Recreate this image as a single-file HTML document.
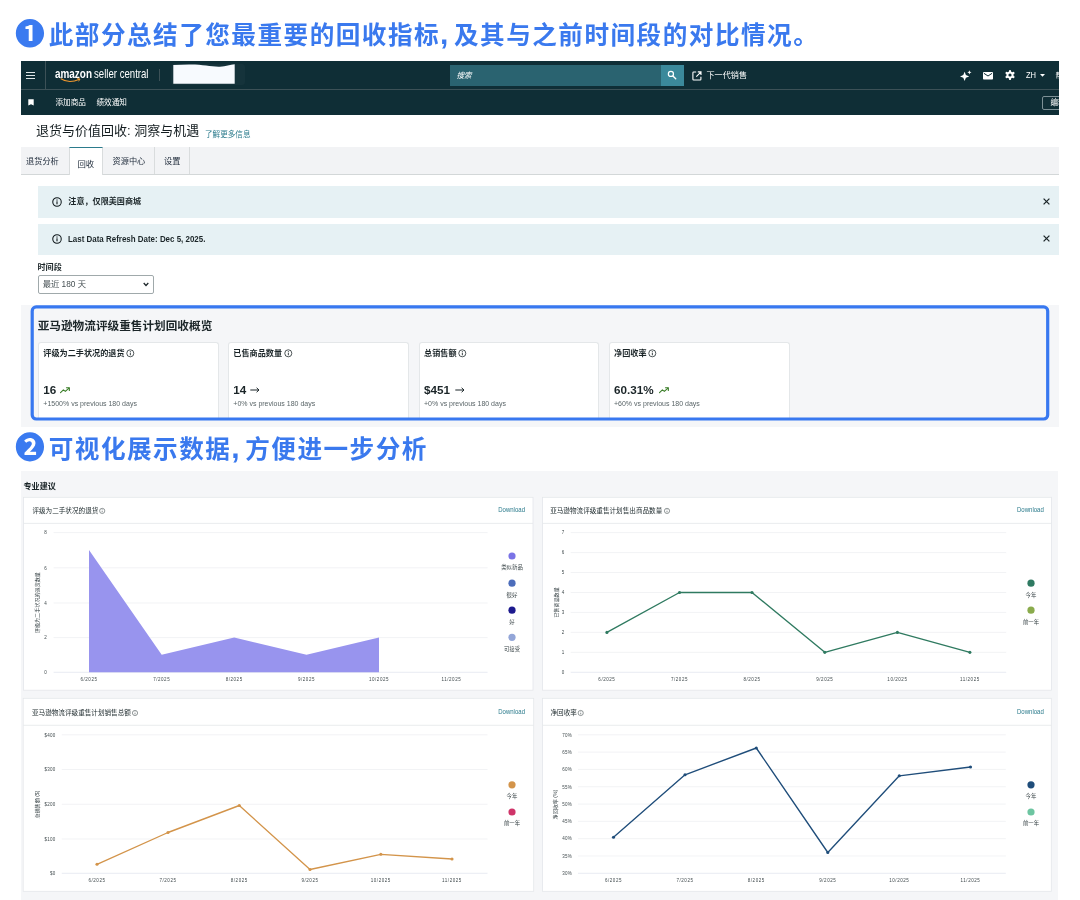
<!DOCTYPE html>
<html lang="zh-CN">
<head>
<meta charset="utf-8">
<title>退货与价值回收: 洞察与机遇</title>
<style>
html,body{margin:0;padding:0;background:#fff;}
body{width:1080px;height:900px;position:relative;overflow:hidden;
  font-family:"Liberation Sans","Noto Sans CJK SC",sans-serif;color:#0f1111;
  -webkit-font-smoothing:antialiased;}
.a{position:absolute;white-space:nowrap;line-height:1;}
.h{position:absolute;white-space:nowrap;line-height:1;color:#3a79ee;font-weight:700;font-size:24.6px;letter-spacing:1.5px;
  font-family:"Liberation Sans","Noto Sans CJK SC",sans-serif;}
.num{position:absolute;line-height:1;color:#3a7af0;font-weight:700;font-size:29.9px;white-space:nowrap;}
.card{top:281.3px;height:77px;background:#fff;border:1px solid #e4e7e9;border-bottom:none;border-radius:3px 3px 0 0;box-sizing:border-box;}
.cl{top:288.5px;font-size:8.15px;font-weight:700;color:#1b2528;}
.cv{top:323.2px;font-size:11.7px;font-weight:700;color:#1b2528;}
.cs{top:339.3px;font-size:7px;color:#5a6568;}
.w{color:#fff;}
.b{font-weight:700;}
.teal{color:#2b7b8c;}
svg{position:absolute;overflow:visible;}
svg text{font-family:"Liberation Sans","Noto Sans CJK SC",sans-serif;}
</style>
</head>
<body>
<div id="root" style="position:absolute;left:0;top:0;width:1080px;height:900px;will-change:transform;">

<!-- ============ HEADING 1 ============ -->
<div class="num" style="left:14.9px;top:19.2px;">❶</div>
<div class="h" style="left:48.7px;top:24px;">此部分总结了您最重要的回收指标<span style="font-size:30px;line-height:0;letter-spacing:0;">,</span><span style="margin-left:5.5px">及其与之前时间段的对比情况。</span></div>

<!-- ============ SCREENSHOT 1 ============ -->
<div id="s1" class="a" style="left:21px;top:61px;width:1037.7px;height:366px;overflow:hidden;background:#fff;">
  <!-- dark header -->
  <div class="a" style="left:0;top:0;width:1038px;height:54.2px;background:#0f2e36;"></div>
  <div class="a" style="left:0;top:27.5px;width:1038px;height:1px;background:#3c5157;"></div>
  <div class="a" style="left:24px;top:0;width:1px;height:28px;background:#3c5157;"></div>
  <!-- hamburger -->
  <div class="a" style="left:5px;top:10.9px;width:9px;height:1.4px;background:#dfe6e7;"></div>
  <div class="a" style="left:5px;top:13.8px;width:9px;height:1.4px;background:#dfe6e7;"></div>
  <div class="a" style="left:5px;top:16.7px;width:9px;height:1.4px;background:#dfe6e7;"></div>
  <!-- logo -->
  <div class="a w b" style="left:34.2px;top:7.6px;font-size:11.9px;transform:scaleX(0.835);transform-origin:0 0;">amazon</div>
  <div class="a w" style="left:72.8px;top:7.3px;font-size:12.1px;transform:scaleX(0.795);transform-origin:0 0;">seller central</div>
  <svg style="left:38.8px;top:17px;" width="22" height="5" viewBox="0 0 22 5"><path d="M1 0.8 C6 4.2 13 4.2 19.5 1.2" fill="none" stroke="#f0982e" stroke-width="1.1" stroke-linecap="round"/><path d="M17.6 0.5 L20 1 L18.8 3" fill="none" stroke="#f0982e" stroke-width="0.9" stroke-linecap="round" stroke-linejoin="round"/></svg>
  <div class="a" style="left:138.2px;top:8px;width:1px;height:12px;background:#3c5157;"></div>
  <div class="a" style="left:150px;top:3px;width:74px;height:21px;border-radius:3px;background:#15333b;"></div>
  <svg style="left:0;top:0;" width="230" height="28"><path d="M152.3 4 L168 3.6 C182 3.4 190 6 199 5.7 C205 5.4 209 3.5 213.7 3.2 L213.7 22.8 L152.3 22.8 Z" fill="#f7fafe"/></svg>
  <!-- search -->
  <div class="a" style="left:429px;top:4px;width:211px;height:20.5px;background:#2a6370;"></div>
  <div class="a" style="left:640px;top:4px;width:23px;height:20.5px;background:#3b899b;"></div>
  <div class="a w" style="left:435.5px;top:10.5px;font-size:7.6px;font-style:italic;">搜索</div>
  <svg style="left:646px;top:9px;" width="10" height="10" viewBox="0 0 11 11"><circle cx="4.3" cy="4.3" r="2.8" fill="none" stroke="#fff" stroke-width="1.35"/><path d="M6.5 6.5 L9.6 9.6" stroke="#fff" stroke-width="1.5" stroke-linecap="round"/></svg>
  <!-- external link + text -->
  <svg style="left:671px;top:9.5px;" width="10" height="10" viewBox="0 0 10 10"><path d="M4.2 1 H1.6 Q0.9 1 0.9 1.7 V8.3 Q0.9 9 1.6 9 H8.2 Q8.9 9 8.9 8.3 V5.8" fill="none" stroke="#fff" stroke-width="1.1"/><path d="M4.3 5.6 L8.8 1.1 M5.8 0.9 H9 V4.1" fill="none" stroke="#fff" stroke-width="1.1"/></svg>
  <div class="a w" style="left:685.5px;top:11.3px;font-size:8.1px;">下一代销售</div>
  <!-- right icons -->
  <svg style="left:938.5px;top:8.5px;" width="12" height="12" viewBox="0 0 12 12"><path d="M4.6 1.8 L5.9 5.1 L9.2 6.4 L5.9 7.7 L4.6 11 L3.3 7.7 L0 6.4 L3.3 5.1 Z" fill="#fff"/><path d="M9.4 0.2 L10 1.7 L11.5 2.3 L10 2.9 L9.4 4.4 L8.8 2.9 L7.3 2.3 L8.8 1.7 Z" fill="#fff"/></svg>
  <svg style="left:961.5px;top:10.5px;" width="10" height="8" viewBox="0 0 10 8"><rect x="0" y="0" width="10" height="7.6" rx="0.8" fill="#fff"/><path d="M0.9 1.3 L5 4 L9.1 1.3" fill="none" stroke="#0f2e36" stroke-width="1"/></svg>
  <svg style="left:984px;top:9.3px;" width="10" height="10" viewBox="0 0 10 10"><g fill="#fff"><circle cx="5" cy="5" r="3.6"/><rect x="4" y="0" width="2" height="10" rx="0.4"/><rect x="4" y="0" width="2" height="10" rx="0.4" transform="rotate(60 5 5)"/><rect x="4" y="0" width="2" height="10" rx="0.4" transform="rotate(120 5 5)"/></g><circle cx="5" cy="5" r="1.6" fill="#0f2e36"/></svg>
  <div class="a w" style="left:1005.3px;top:10.2px;font-size:9px;transform:scaleX(0.84);transform-origin:0 0;">ZH</div>
  <svg style="left:1019.3px;top:13.2px;" width="5" height="3" viewBox="0 0 5 3"><path d="M0 0 H5 L2.5 2.8 Z" fill="#fff"/></svg>
  <div class="a w" style="left:1034.5px;top:11.3px;font-size:7.4px;">帮助</div>
  <!-- row 2 -->
  <svg style="left:7.3px;top:37.8px;" width="6" height="7" viewBox="0 0 6 7"><path d="M0.3 0.2 H5.7 V6.6 L3 5.2 L0.3 6.6 Z" fill="#fff"/></svg>
  <div class="a w" style="left:34.5px;top:37.8px;font-size:7.6px;">添加商品</div>
  <div class="a w" style="left:75.5px;top:37.8px;font-size:7.6px;">绩效通知</div>
  <div class="a" style="left:1020.9px;top:34.6px;width:30px;height:14px;border:0.8px solid #7d9096;border-radius:2px;box-sizing:border-box;"></div>
  <div class="a w" style="left:1029.5px;top:38px;font-size:7.6px;">编辑</div>

  <!-- page title -->
  <div class="a" style="left:15px;top:62.5px;font-size:13px;color:#141d20;">退货与价值回收: 洞察与机遇</div>
  <div class="a teal" style="left:184px;top:69.7px;font-size:7.6px;">了解更多信息</div>

  <!-- tabs -->
  <div class="a" style="left:0;top:86px;width:1038px;height:27px;background:#f2f3f5;border-bottom:1px solid #d3d7d8;"></div>
  <div class="a" style="left:48px;top:86px;width:34px;height:27.7px;background:#fff;border-left:1px solid #d9dcdd;border-right:1px solid #d9dcdd;border-top:1.6px solid #2b7b8c;box-sizing:border-box;"></div>
  <div class="a" style="left:133px;top:86px;width:1px;height:27px;background:#d9dcdd;"></div>
  <div class="a" style="left:168px;top:86px;width:1px;height:27px;background:#d9dcdd;"></div>
  <div class="a" style="left:5px;top:97px;font-size:8.2px;color:#232f3e;">退货分析</div>
  <div class="a" style="left:56.5px;top:98.5px;font-size:8.4px;color:#232f3e;">回收</div>
  <div class="a" style="left:91.5px;top:97px;font-size:8.2px;color:#232f3e;">资源中心</div>
  <div class="a" style="left:143px;top:97px;font-size:8.2px;color:#232f3e;">设置</div>


  <!-- alerts -->
  <div class="a" style="left:16.5px;top:125px;width:1022px;height:32px;background:#e6f1f4;"></div>
  <div class="a" style="left:16.5px;top:163px;width:1022px;height:31px;background:#e6f1f4;"></div>
  <svg style="left:31.2px;top:135.8px;" width="10" height="10" viewBox="0 0 10 10"><circle cx="5" cy="5" r="4.25" fill="none" stroke="#10191c" stroke-width="1.05"/><rect x="4.45" y="4.3" width="1.1" height="3" fill="#10191c"/><rect x="4.45" y="2.5" width="1.1" height="1.1" fill="#10191c"/></svg>
  <svg style="left:31.2px;top:173.1px;" width="10" height="10" viewBox="0 0 10 10"><circle cx="5" cy="5" r="4.25" fill="none" stroke="#10191c" stroke-width="1.05"/><rect x="4.45" y="4.3" width="1.1" height="3" fill="#10191c"/><rect x="4.45" y="2.5" width="1.1" height="1.1" fill="#10191c"/></svg>
  <div class="a b" style="left:47.3px;top:136.8px;font-size:8.1px;color:#1b2528;">注意，仅限美国商城</div>
  <div class="a b" style="left:47.3px;top:174px;font-size:8.7px;color:#1b2528;transform:scaleX(0.915);transform-origin:0 0;">Last Data Refresh Date: Dec 5, 2025.</div>
  <svg style="left:1022.3px;top:136.8px;" width="7" height="7" viewBox="0 0 7 7"><path d="M0.6 0.6 L6.4 6.4 M6.4 0.6 L0.6 6.4" stroke="#1b2528" stroke-width="1.25" fill="none"/></svg>
  <svg style="left:1022.3px;top:174.2px;" width="7" height="7" viewBox="0 0 7 7"><path d="M0.6 0.6 L6.4 6.4 M6.4 0.6 L0.6 6.4" stroke="#1b2528" stroke-width="1.25" fill="none"/></svg>

  <!-- time period -->
  <div class="a b" style="left:16.5px;top:202.7px;font-size:8.1px;color:#1b2528;">时间段</div>
  <div class="a" style="left:16.7px;top:214.3px;width:116.5px;height:18.5px;border:0.9px solid #a0a9ab;border-radius:2px;box-sizing:border-box;background:#fff;"></div>
  <div class="a" style="left:21.7px;top:219.3px;font-size:8.3px;color:#454f52;">最近 180 天</div>
  <svg style="left:121.8px;top:220.8px;" width="6" height="5" viewBox="0 0 6 5"><path d="M0.7 1 L3 3.5 L5.3 1" fill="none" stroke="#1b2528" stroke-width="1.25"/></svg>

  <!-- summary -->
  <div class="a" style="left:0;top:244px;width:1038px;height:122px;background:#f5f6f8;"></div>
  <div class="a card" style="left:16.7px;width:181px;"></div>
  <div class="a card" style="left:207.3px;width:180.5px;"></div>
  <div class="a card" style="left:398px;width:180px;"></div>
  <div class="a card" style="left:588px;width:180.5px;"></div>
  <svg style="left:0;top:0;" width="1038" height="366"><rect x="11.2" y="245.9" width="1015.5" height="112.1" rx="4" ry="4" fill="none" stroke="#3878f0" stroke-width="3.2"/></svg>
  <div class="a b" style="left:16.7px;top:258.8px;font-size:11.65px;color:#1b2528;">亚马逊物流评级重售计划回收概览</div>


  <div class="a cl" style="left:22.3px;">评级为二手状况的退货</div><svg style="left:105.3px;top:288px;" width="8.6" height="8.6" viewBox="0 0 10 10"><circle cx="5" cy="5" r="4.1" fill="none" stroke="#1b2528" stroke-width="0.9"/><rect x="4.5" y="4.3" width="1" height="3" fill="#1b2528"/><rect x="4.5" y="2.5" width="1" height="1.1" fill="#1b2528"/></svg>
  <div class="a cv" style="left:22.3px;">16</div><svg style="left:39px;top:326.4px;" width="10.2" height="6.8" viewBox="0 0 12 8"><path d="M0.6 6.6 L4 3.4 L6.3 5.2 L10.6 1.3" fill="none" stroke="#3a7d28" stroke-width="1.3" stroke-linejoin="round" stroke-linecap="round"/><path d="M7.6 0.9 H11 V4.2" fill="none" stroke="#3a7d28" stroke-width="1.3" stroke-linejoin="round" stroke-linecap="round"/></svg>
  <div class="a cs" style="left:22.3px;">+1500% vs previous 180 days</div>
  <div class="a cl" style="left:212.3px;">已售商品数量</div><svg style="left:262.5px;top:288px;" width="8.6" height="8.6" viewBox="0 0 10 10"><circle cx="5" cy="5" r="4.1" fill="none" stroke="#1b2528" stroke-width="0.9"/><rect x="4.5" y="4.3" width="1" height="3" fill="#1b2528"/><rect x="4.5" y="2.5" width="1" height="1.1" fill="#1b2528"/></svg>
  <div class="a cv" style="left:212.3px;">14</div><svg style="left:229px;top:326.2px;" width="10" height="6" viewBox="0 0 10 6"><path d="M0.3 3 H9 M6.6 0.8 L9 3 L6.6 5.2" fill="none" stroke="#1b2528" stroke-width="1" stroke-linejoin="round"/></svg>
  <div class="a cs" style="left:212.3px;">+0% vs previous 180 days</div>
  <div class="a cl" style="left:403px;">总销售额</div><svg style="left:437px;top:288px;" width="8.6" height="8.6" viewBox="0 0 10 10"><circle cx="5" cy="5" r="4.1" fill="none" stroke="#1b2528" stroke-width="0.9"/><rect x="4.5" y="4.3" width="1" height="3" fill="#1b2528"/><rect x="4.5" y="2.5" width="1" height="1.1" fill="#1b2528"/></svg>
  <div class="a cv" style="left:403px;">$451</div><svg style="left:433.5px;top:326.2px;" width="10" height="6" viewBox="0 0 10 6"><path d="M0.3 3 H9 M6.6 0.8 L9 3 L6.6 5.2" fill="none" stroke="#1b2528" stroke-width="1" stroke-linejoin="round"/></svg>
  <div class="a cs" style="left:403px;">+0% vs previous 180 days</div>
  <div class="a cl" style="left:593px;">净回收率</div><svg style="left:627px;top:288px;" width="8.6" height="8.6" viewBox="0 0 10 10"><circle cx="5" cy="5" r="4.1" fill="none" stroke="#1b2528" stroke-width="0.9"/><rect x="4.5" y="4.3" width="1" height="3" fill="#1b2528"/><rect x="4.5" y="2.5" width="1" height="1.1" fill="#1b2528"/></svg>
  <div class="a cv" style="left:593px;">60.31%</div><svg style="left:637.5px;top:326.4px;" width="10.2" height="6.8" viewBox="0 0 12 8"><path d="M0.6 6.6 L4 3.4 L6.3 5.2 L10.6 1.3" fill="none" stroke="#3a7d28" stroke-width="1.3" stroke-linejoin="round" stroke-linecap="round"/><path d="M7.6 0.9 H11 V4.2" fill="none" stroke="#3a7d28" stroke-width="1.3" stroke-linejoin="round" stroke-linecap="round"/></svg>
  <div class="a cs" style="left:593px;">+60% vs previous 180 days</div>


</div>

<!-- ============ HEADING 2 ============ -->
<div class="num" style="left:14.9px;top:433px;">❷</div>
<div class="h" style="left:48.7px;top:438px;">可视化展示数据<span style="font-size:30px;line-height:0;letter-spacing:0;">,</span><span style="margin-left:5.5px">方便进一步分析</span></div>

<!-- ============ SCREENSHOT 2 ============ -->
<div id="s2" class="a" style="left:21px;top:471px;width:1037.3px;height:429px;overflow:hidden;background:#f5f6f8;"></div>
<!--CHARTS-BEGIN-->
<svg style="left:0;top:0;" width="1080" height="900" viewBox="0 0 1080 900">
<text x="23.5" y="489" font-size="8.1" font-weight="700" fill="#1b2528">专业建议</text>
<rect x="23.5" y="497.3" width="509.5" height="192.9" fill="#fff" stroke="#e4e7ea" stroke-width="0.8"/>
<path d="M23.5 523.4 H533" stroke="#e4e7ea" stroke-width="0.8"/>
<text x="32.4" y="513.2" font-size="6.6" fill="#222e31">评级为二手状况的退货</text>
<circle cx="102.2" cy="510.9" r="2.6" fill="none" stroke="#3a4548" stroke-width="0.55"/>
<path d="M102.2 510.7 V512.3 M102.2 509.4 V510" stroke="#3a4548" stroke-width="0.6" fill="none"/>
<text transform="translate(498.2 512.3) scale(0.875 1)" font-size="6.9" fill="#2b7b8c">Download</text>
<path d="M53.6 532.6 H487.6" stroke="#eceef1" stroke-width="0.7"/>
<text x="47" y="534.4" font-size="4.5" fill="#414b4e" text-anchor="end" letter-spacing="0.25">8</text>
<path d="M53.6 567.8 H487.6" stroke="#eceef1" stroke-width="0.7"/>
<text x="47" y="569.6" font-size="4.5" fill="#414b4e" text-anchor="end" letter-spacing="0.25">6</text>
<path d="M53.6 603 H487.6" stroke="#eceef1" stroke-width="0.7"/>
<text x="47" y="604.8" font-size="4.5" fill="#414b4e" text-anchor="end" letter-spacing="0.25">4</text>
<path d="M53.6 637.6 H487.6" stroke="#eceef1" stroke-width="0.7"/>
<text x="47" y="639.4" font-size="4.5" fill="#414b4e" text-anchor="end" letter-spacing="0.25">2</text>
<path d="M53.6 672.3 H487.6" stroke="#dfe3ee" stroke-width="0.7"/>
<text x="47" y="674.1" font-size="4.5" fill="#414b4e" text-anchor="end" letter-spacing="0.25">0</text>
<path d="M89 672.3 L89 550.06 L161.7 654.84 L234.2 637.38 L306.5 654.84 L379 637.38 L379 672.3 Z" fill="#9894ee"/>
<text x="89" y="680.8" font-size="4.5" fill="#3f494c" text-anchor="middle" letter-spacing="0.55">6/2025</text>
<text x="161.7" y="680.8" font-size="4.5" fill="#3f494c" text-anchor="middle" letter-spacing="0.55">7/2025</text>
<text x="234.2" y="680.8" font-size="4.5" fill="#3f494c" text-anchor="middle" letter-spacing="0.55">8/2025</text>
<text x="306.5" y="680.8" font-size="4.5" fill="#3f494c" text-anchor="middle" letter-spacing="0.55">9/2025</text>
<text x="379" y="680.8" font-size="4.5" fill="#3f494c" text-anchor="middle" letter-spacing="0.55">10/2025</text>
<text x="451.4" y="680.8" font-size="4.5" fill="#3f494c" text-anchor="middle" letter-spacing="0.55">11/2025</text>
<text transform="translate(39.3 602.6) rotate(-90)" font-size="5.1" fill="#3a4548" text-anchor="middle">评级为二手状况的退货数量</text>
<circle cx="512" cy="556" r="3.6" fill="#7a73e6"/>
<text x="512" y="569.4" font-size="5.4" fill="#3a4548" text-anchor="middle">类似新品</text>
<circle cx="512" cy="583.2" r="3.6" fill="#4c6dbb"/>
<text x="512" y="596.6" font-size="5.4" fill="#3a4548" text-anchor="middle">很好</text>
<circle cx="512" cy="610.2" r="3.6" fill="#1d1a8e"/>
<text x="512" y="623.6" font-size="5.4" fill="#3a4548" text-anchor="middle">好</text>
<circle cx="512" cy="637.3" r="3.6" fill="#93a6d8"/>
<text x="512" y="650.7" font-size="5.4" fill="#3a4548" text-anchor="middle">可接受</text>
<rect x="542.5" y="497.3" width="508.9" height="192.9" fill="#fff" stroke="#e4e7ea" stroke-width="0.8"/>
<path d="M542.5 523.4 H1051.4" stroke="#e4e7ea" stroke-width="0.8"/>
<text x="550.2" y="513.2" font-size="6.6" fill="#222e31">亚马逊物流评级重售计划售出商品数量</text>
<circle cx="667" cy="510.9" r="2.6" fill="none" stroke="#3a4548" stroke-width="0.55"/>
<path d="M667 510.7 V512.3 M667 509.4 V510" stroke="#3a4548" stroke-width="0.6" fill="none"/>
<text transform="translate(1017 512.3) scale(0.875 1)" font-size="6.9" fill="#2b7b8c">Download</text>
<path d="M570.7 532.6 H1006.2" stroke="#eceef1" stroke-width="0.7"/>
<text x="564.5" y="534.4" font-size="4.5" fill="#414b4e" text-anchor="end" letter-spacing="0.25">7</text>
<path d="M570.7 552.56 H1006.2" stroke="#eceef1" stroke-width="0.7"/>
<text x="564.5" y="554.36" font-size="4.5" fill="#414b4e" text-anchor="end" letter-spacing="0.25">6</text>
<path d="M570.7 572.51 H1006.2" stroke="#eceef1" stroke-width="0.7"/>
<text x="564.5" y="574.31" font-size="4.5" fill="#414b4e" text-anchor="end" letter-spacing="0.25">5</text>
<path d="M570.7 592.47 H1006.2" stroke="#eceef1" stroke-width="0.7"/>
<text x="564.5" y="594.27" font-size="4.5" fill="#414b4e" text-anchor="end" letter-spacing="0.25">4</text>
<path d="M570.7 612.43 H1006.2" stroke="#eceef1" stroke-width="0.7"/>
<text x="564.5" y="614.23" font-size="4.5" fill="#414b4e" text-anchor="end" letter-spacing="0.25">3</text>
<path d="M570.7 632.39 H1006.2" stroke="#eceef1" stroke-width="0.7"/>
<text x="564.5" y="634.19" font-size="4.5" fill="#414b4e" text-anchor="end" letter-spacing="0.25">2</text>
<path d="M570.7 652.34 H1006.2" stroke="#eceef1" stroke-width="0.7"/>
<text x="564.5" y="654.14" font-size="4.5" fill="#414b4e" text-anchor="end" letter-spacing="0.25">1</text>
<path d="M570.7 672.3 H1006.2" stroke="#dfe3ee" stroke-width="0.7"/>
<text x="564.5" y="674.1" font-size="4.5" fill="#414b4e" text-anchor="end" letter-spacing="0.25">0</text>
<path d="M606.9 632.39 L679.5 592.47 L752 592.47 L824.8 652.34 L897.4 632.39 L969.9 652.34" fill="none" stroke="#2f7a60" stroke-width="1.35" stroke-linejoin="round"/>
<circle cx="606.9" cy="632.39" r="1.55" fill="#2f7a60"/>
<circle cx="679.5" cy="592.47" r="1.55" fill="#2f7a60"/>
<circle cx="752" cy="592.47" r="1.55" fill="#2f7a60"/>
<circle cx="824.8" cy="652.34" r="1.55" fill="#2f7a60"/>
<circle cx="897.4" cy="632.39" r="1.55" fill="#2f7a60"/>
<circle cx="969.9" cy="652.34" r="1.55" fill="#2f7a60"/>
<text x="606.9" y="680.8" font-size="4.5" fill="#3f494c" text-anchor="middle" letter-spacing="0.55">6/2025</text>
<text x="679.5" y="680.8" font-size="4.5" fill="#3f494c" text-anchor="middle" letter-spacing="0.55">7/2025</text>
<text x="752" y="680.8" font-size="4.5" fill="#3f494c" text-anchor="middle" letter-spacing="0.55">8/2025</text>
<text x="824.8" y="680.8" font-size="4.5" fill="#3f494c" text-anchor="middle" letter-spacing="0.55">9/2025</text>
<text x="897.4" y="680.8" font-size="4.5" fill="#3f494c" text-anchor="middle" letter-spacing="0.55">10/2025</text>
<text x="969.9" y="680.8" font-size="4.5" fill="#3f494c" text-anchor="middle" letter-spacing="0.55">11/2025</text>
<text transform="translate(557.6 602.5) rotate(-90)" font-size="5.1" fill="#3a4548" text-anchor="middle">已售商品数量</text>
<circle cx="1031" cy="583.2" r="3.6" fill="#2f7a62"/>
<text x="1031" y="596.6" font-size="5.4" fill="#3a4548" text-anchor="middle">今年</text>
<circle cx="1031" cy="610.2" r="3.6" fill="#8aab4c"/>
<text x="1031" y="623.6" font-size="5.4" fill="#3a4548" text-anchor="middle">前一年</text>
<rect x="23.2" y="698.3" width="510.5" height="193" fill="#fff" stroke="#e4e7ea" stroke-width="0.8"/>
<path d="M23.2 725.3 H533.7" stroke="#e4e7ea" stroke-width="0.8"/>
<text x="32" y="715.3" font-size="6.6" fill="#222e31">亚马逊物流评级重售计划销售总额</text>
<circle cx="135" cy="713" r="2.6" fill="none" stroke="#3a4548" stroke-width="0.55"/>
<path d="M135 712.8 V714.4 M135 711.5 V712.1" stroke="#3a4548" stroke-width="0.6" fill="none"/>
<text transform="translate(498.2 714.4) scale(0.875 1)" font-size="6.9" fill="#2b7b8c">Download</text>
<path d="M61.8 734.8 H487.5" stroke="#eceef1" stroke-width="0.7"/>
<text x="55.5" y="736.6" font-size="4.5" fill="#414b4e" text-anchor="end" letter-spacing="0.25">$400</text>
<path d="M61.8 769.5 H487.5" stroke="#eceef1" stroke-width="0.7"/>
<text x="55.5" y="771.3" font-size="4.5" fill="#414b4e" text-anchor="end" letter-spacing="0.25">$300</text>
<path d="M61.8 804.3 H487.5" stroke="#eceef1" stroke-width="0.7"/>
<text x="55.5" y="806.1" font-size="4.5" fill="#414b4e" text-anchor="end" letter-spacing="0.25">$200</text>
<path d="M61.8 839 H487.5" stroke="#eceef1" stroke-width="0.7"/>
<text x="55.5" y="840.8" font-size="4.5" fill="#414b4e" text-anchor="end" letter-spacing="0.25">$100</text>
<path d="M61.8 873.3 H487.5" stroke="#dfe3ee" stroke-width="0.7"/>
<text x="55.5" y="875.1" font-size="4.5" fill="#414b4e" text-anchor="end" letter-spacing="0.25">$0</text>
<path d="M97 864.3 L168 832.5 L239.3 805.5 L310 869.5 L380.8 854.3 L452 859" fill="none" stroke="#d3944a" stroke-width="1.35" stroke-linejoin="round"/>
<circle cx="97" cy="864.3" r="1.55" fill="#d3944a"/>
<circle cx="168" cy="832.5" r="1.55" fill="#d3944a"/>
<circle cx="239.3" cy="805.5" r="1.55" fill="#d3944a"/>
<circle cx="310" cy="869.5" r="1.55" fill="#d3944a"/>
<circle cx="380.8" cy="854.3" r="1.55" fill="#d3944a"/>
<circle cx="452" cy="859" r="1.55" fill="#d3944a"/>
<text x="97" y="882.4" font-size="4.5" fill="#3f494c" text-anchor="middle" letter-spacing="0.55">6/2025</text>
<text x="168" y="882.4" font-size="4.5" fill="#3f494c" text-anchor="middle" letter-spacing="0.55">7/2025</text>
<text x="239.3" y="882.4" font-size="4.5" fill="#3f494c" text-anchor="middle" letter-spacing="0.55">8/2025</text>
<text x="310" y="882.4" font-size="4.5" fill="#3f494c" text-anchor="middle" letter-spacing="0.55">9/2025</text>
<text x="380.8" y="882.4" font-size="4.5" fill="#3f494c" text-anchor="middle" letter-spacing="0.55">10/2025</text>
<text x="452" y="882.4" font-size="4.5" fill="#3f494c" text-anchor="middle" letter-spacing="0.55">11/2025</text>
<text transform="translate(38.8 804.6) rotate(-90)" font-size="5.1" fill="#3a4548" text-anchor="middle">总销售额 ($)</text>
<circle cx="512" cy="784.8" r="3.6" fill="#d3944a"/>
<text x="512" y="798.2" font-size="5.4" fill="#3a4548" text-anchor="middle">今年</text>
<circle cx="512" cy="812" r="3.6" fill="#cf3469"/>
<text x="512" y="825.4" font-size="5.4" fill="#3a4548" text-anchor="middle">前一年</text>
<rect x="542.5" y="698.3" width="508.8" height="193" fill="#fff" stroke="#e4e7ea" stroke-width="0.8"/>
<path d="M542.5 725.3 H1051.3" stroke="#e4e7ea" stroke-width="0.8"/>
<text x="550.5" y="715.3" font-size="6.6" fill="#222e31">净回收率</text>
<circle cx="580.7" cy="713" r="2.6" fill="none" stroke="#3a4548" stroke-width="0.55"/>
<path d="M580.7 712.8 V714.4 M580.7 711.5 V712.1" stroke="#3a4548" stroke-width="0.6" fill="none"/>
<text transform="translate(1017 714.4) scale(0.875 1)" font-size="6.9" fill="#2b7b8c">Download</text>
<path d="M578 734.8 H1005.8" stroke="#eceef1" stroke-width="0.7"/>
<text x="572" y="736.6" font-size="4.5" fill="#414b4e" text-anchor="end" letter-spacing="0.25">70%</text>
<path d="M578 752.11 H1005.8" stroke="#eceef1" stroke-width="0.7"/>
<text x="572" y="753.91" font-size="4.5" fill="#414b4e" text-anchor="end" letter-spacing="0.25">65%</text>
<path d="M578 769.42 H1005.8" stroke="#eceef1" stroke-width="0.7"/>
<text x="572" y="771.22" font-size="4.5" fill="#414b4e" text-anchor="end" letter-spacing="0.25">60%</text>
<path d="M578 786.74 H1005.8" stroke="#eceef1" stroke-width="0.7"/>
<text x="572" y="788.54" font-size="4.5" fill="#414b4e" text-anchor="end" letter-spacing="0.25">55%</text>
<path d="M578 804.05 H1005.8" stroke="#eceef1" stroke-width="0.7"/>
<text x="572" y="805.85" font-size="4.5" fill="#414b4e" text-anchor="end" letter-spacing="0.25">50%</text>
<path d="M578 821.36 H1005.8" stroke="#eceef1" stroke-width="0.7"/>
<text x="572" y="823.16" font-size="4.5" fill="#414b4e" text-anchor="end" letter-spacing="0.25">45%</text>
<path d="M578 838.67 H1005.8" stroke="#eceef1" stroke-width="0.7"/>
<text x="572" y="840.47" font-size="4.5" fill="#414b4e" text-anchor="end" letter-spacing="0.25">40%</text>
<path d="M578 855.99 H1005.8" stroke="#eceef1" stroke-width="0.7"/>
<text x="572" y="857.79" font-size="4.5" fill="#414b4e" text-anchor="end" letter-spacing="0.25">35%</text>
<path d="M578 873.3 H1005.8" stroke="#dfe3ee" stroke-width="0.7"/>
<text x="572" y="875.1" font-size="4.5" fill="#414b4e" text-anchor="end" letter-spacing="0.25">30%</text>
<path d="M613.5 837.3 L685 774.8 L756.3 748 L827.8 852.5 L899.3 775.8 L970.5 767" fill="none" stroke="#1f4d7a" stroke-width="1.35" stroke-linejoin="round"/>
<circle cx="613.5" cy="837.3" r="1.55" fill="#1f4d7a"/>
<circle cx="685" cy="774.8" r="1.55" fill="#1f4d7a"/>
<circle cx="756.3" cy="748" r="1.55" fill="#1f4d7a"/>
<circle cx="827.8" cy="852.5" r="1.55" fill="#1f4d7a"/>
<circle cx="899.3" cy="775.8" r="1.55" fill="#1f4d7a"/>
<circle cx="970.5" cy="767" r="1.55" fill="#1f4d7a"/>
<text x="613.5" y="882.4" font-size="4.5" fill="#3f494c" text-anchor="middle" letter-spacing="0.55">6/2025</text>
<text x="685" y="882.4" font-size="4.5" fill="#3f494c" text-anchor="middle" letter-spacing="0.55">7/2025</text>
<text x="756.3" y="882.4" font-size="4.5" fill="#3f494c" text-anchor="middle" letter-spacing="0.55">8/2025</text>
<text x="827.8" y="882.4" font-size="4.5" fill="#3f494c" text-anchor="middle" letter-spacing="0.55">9/2025</text>
<text x="899.3" y="882.4" font-size="4.5" fill="#3f494c" text-anchor="middle" letter-spacing="0.55">10/2025</text>
<text x="970.5" y="882.4" font-size="4.5" fill="#3f494c" text-anchor="middle" letter-spacing="0.55">11/2025</text>
<text transform="translate(557.3 804.6) rotate(-90)" font-size="5.1" fill="#3a4548" text-anchor="middle">净回收率 (%)</text>
<circle cx="1031" cy="784.8" r="3.6" fill="#1f4d7a"/>
<text x="1031" y="798.2" font-size="5.4" fill="#3a4548" text-anchor="middle">今年</text>
<circle cx="1031" cy="812" r="3.6" fill="#6dc5a1"/>
<text x="1031" y="825.4" font-size="5.4" fill="#3a4548" text-anchor="middle">前一年</text>
</svg>
<!--CHARTS-END-->

</div>
</body>
</html>
